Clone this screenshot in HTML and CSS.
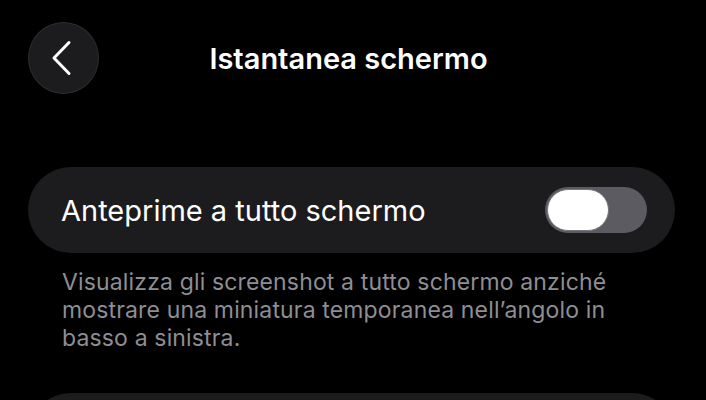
FILE: index.html
```html
<!DOCTYPE html>
<html lang="it">
<head>
<meta charset="utf-8">
<link rel="stylesheet" href="styles.css">
</head>
<body>
<div class="screen">
  <header class="nav">
    <button class="back" aria-label="Indietro">
      <svg width="22" height="36" viewBox="0 0 22 36"><path d="M18 2.5 L3 18 L18 33.5" fill="none" stroke="#fff" stroke-width="3" stroke-linecap="round" stroke-linejoin="round"/></svg>
    </button>
    <h1 class="title">Istantanea schermo</h1>
  </header>
  <section class="group">
    <div class="card row">
      <span class="label">Anteprime a tutto schermo</span>
      <span class="toggle"><span class="knob"></span></span>
    </div>
    <p class="footer">Visualizza gli screenshot a tutto schermo anziché mostrare una miniatura temporanea nell’angolo in basso a sinistra.</p>
  </section>
  <div class="card next"></div>
</div>
</body>
</html>
```
FILE: styles.css
```css
* { box-sizing: border-box; }
html, body { margin: 0; padding: 0; background: #000; }
body {
  font-family: Inter, "Noto Sans", "Liberation Sans", sans-serif;
  color: #fff;
  width: 706px;
  height: 400px;
  overflow: hidden;
}
.screen { padding: 22px 31px 0 28px; }
.nav {
  position: relative;
  height: 72px;
  display: flex;
  align-items: center;
}
.back {
  width: 71px;
  height: 72px;
  border-radius: 50%;
  background: #1c1c1e;
  border: 1px solid #2e2e30;
  display: flex;
  align-items: center;
  justify-content: center;
  padding: 0 4px 0 0;
  flex: none;
}
.title {
  position: absolute;
  left: 0; right: 0; top: 0; bottom: 0;
  margin: 0;
  display: flex;
  align-items: center;
  justify-content: center;
  font-size: 29px;
  font-weight: 600;
  letter-spacing: 0;
  pointer-events: none;
  padding-right: 6px;
}
.group { margin-top: 73px; }
.card {
  background: #1c1c1e;
  border-radius: 43px;
}
.row {
  height: 86px;
  display: flex;
  align-items: center;
  justify-content: space-between;
  padding: 0 28px 0 33px;
}
.label {
  font-size: 29px;
  font-weight: 400;
  letter-spacing: 0;
}
.toggle {
  width: 102px;
  height: 46px;
  border-radius: 23px;
  background: #5c5b61;
  display: flex;
  align-items: center;
  padding-left: 2px;
}
.knob {
  width: 62px;
  height: 42px;
  border-radius: 21px;
  background: #fff;
  border: 1.5px solid #76767a;
}
.footer {
  margin: 15px 0 0;
  padding: 0 38px 0 34px;
  font-size: 23px;
  line-height: 28px;
  color: #8e8e93;
  letter-spacing: 0.15px;
}
.next {
  margin-top: 41px;
  height: 86px;
}
```
